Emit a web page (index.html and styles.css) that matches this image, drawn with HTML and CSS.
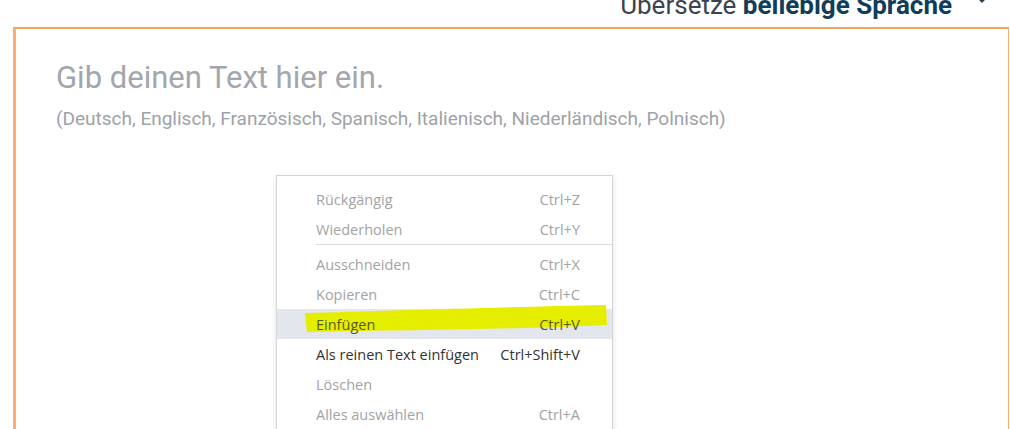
FILE: index.html
```html
<!DOCTYPE html>
<html lang="de">
<head>
<meta charset="utf-8">
<link rel="stylesheet" href="styles.css">
</head>
<body>
<header class="topbar">
  <span class="lang">Übersetze <b>beliebige Sprache</b></span>
  <svg class="chev" width="12" height="8" viewBox="0 0 12 8"><path d="M2 1.5 L6 5.5 L10 1.5" fill="none" stroke="#2c3e50" stroke-width="2"/></svg>
</header>
<main class="box">
  <h1 class="title">Gib deinen Text hier ein.</h1>
  <p class="sub">(Deutsch, Englisch, Französisch, Spanisch, Italienisch, Niederländisch, Polnisch)</p>
  <div class="menu">
    <div class="item dis"><span>Rückgängig</span><span>Ctrl+Z</span></div>
    <div class="item dis"><span>Wiederholen</span><span>Ctrl+Y</span></div>
    <div class="sep"></div>
    <div class="item dis"><span>Ausschneiden</span><span>Ctrl+X</span></div>
    <div class="item dis"><span>Kopieren</span><span>Ctrl+C</span></div>
    <div class="item hover">
      <svg class="marker" width="304" height="28" viewBox="0 0 304 28"><path d="M2 8 C80 6 200 2 303 0 L304 20 C220 24 120 25 4 27 Z" fill="#e6ee00"/></svg>
      <span class="lbl">Einfügen</span><span class="lbl">Ctrl+V</span>
    </div>
    <div class="item"><span>Als reinen Text einfügen</span><span>Ctrl+Shift+V</span></div>
    <div class="item dis"><span>Löschen</span><span></span></div>
    <div class="item dis"><span>Alles auswählen</span><span>Ctrl+A</span></div>
  </div>
</main>
</body>
</html>
```
FILE: styles.css
```css
html, body {
  margin: 0;
  padding: 0;
  background: #fff;
  overflow: hidden;
  height: 429px;
}
body {
  font-family: Roboto, "Liberation Sans", sans-serif;
}
.topbar {
  display: flex;
  justify-content: flex-end;
  align-items: center;
  gap: 24px;
  height: 24px;
  margin-top: -7px;
  margin-bottom: 10px;
  padding-right: 22px;
  font-size: 26px;
  line-height: 24px;
  color: #3a4450;
}
.lang b {
  color: #0f3d5a;
  font-weight: 700;
}
.chev {
  margin-top: -10px;
}
.box {
  position: relative;
  margin-left: 13px;
  margin-right: 1px;
  height: 420px;
  border-top: 2px solid #f5a45e;
  border-left: 3px solid #f7b070;
  border-right: 1px solid #f7b070;
  padding: 31px 0 0 40px;
  box-sizing: border-box;
}
.title {
  margin: 0;
  font-weight: 400;
  font-size: 31px;
  line-height: 36px;
  color: #a2a6ad;
}
.sub {
  margin: 12px 0 0;
  font-size: 19px;
  line-height: 22px;
  color: #9ea2a9;
}
.menu {
  position: absolute;
  left: 260px;
  top: 146px;
  width: 337px;
  height: 300px;
  box-sizing: border-box;
  background: #fff;
  border: 1px solid #d6d6d6;
  box-shadow: 0 2px 6px rgba(0,0,0,0.12);
  padding-top: 8px;
  font-family: "Open Sans", "Noto Sans", sans-serif;
  font-size: 14.5px;
}
.item {
  position: relative;
  display: flex;
  justify-content: space-between;
  align-items: center;
  height: 30px;
  padding: 0 32px 0 39px;
  color: #333;
}
.item.dis {
  color: #a3a3a3;
}
.item.hover {
  background: #e3e7ed;
  color: #5a5a1a;
}
.lbl {
  position: relative;
}
.marker {
  position: absolute;
  left: 26px;
  top: -4px;
}
.sep {
  height: 1px;
  background: #dcdcdc;
  margin: 0 0 4px 39px;
}
```
